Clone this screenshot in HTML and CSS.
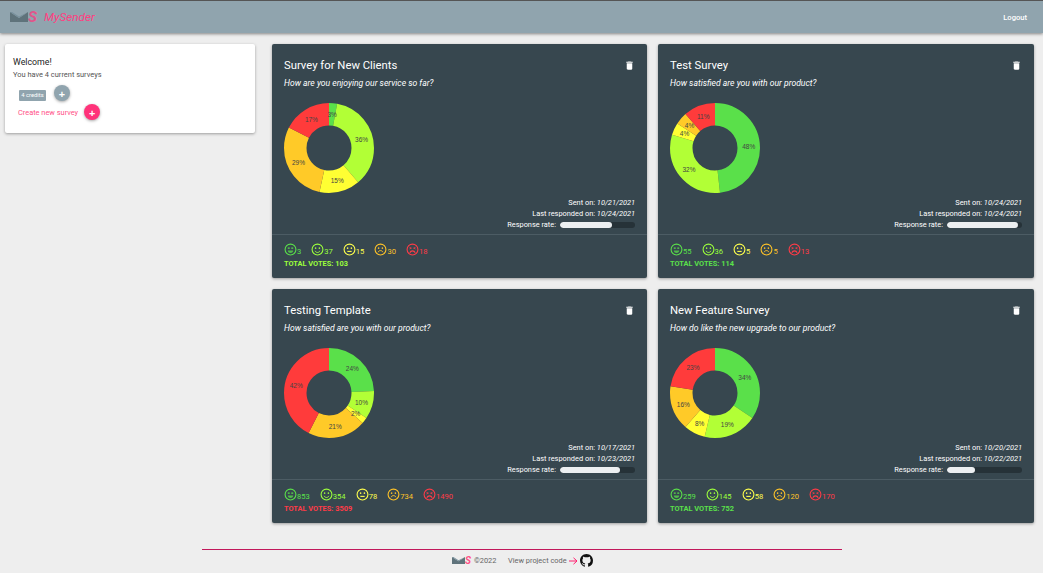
FILE: index.html
```html
<!DOCTYPE html>
<html lang="en">
<head>
    <meta charset="UTF-8">
    <meta name="viewport" content="width=device-width, initial-scale=1.0">
    <title>MySender</title>
    <link rel="stylesheet" href="styles.css">
</head>
<body>
    <svg class="defs" width="0" height="0">
        <symbol id="face1" viewBox="0 0 24 24"><circle cx="12" cy="12" r="10" fill="none" stroke="currentColor" stroke-width="2"/><path d="M7 9.500h3.500M13.500 9.500h3.500" stroke="currentColor" stroke-width="2"/><path d="M7 14h10a5 4.500 0 0 1-10 0z" fill="currentColor" opacity=".75"/></symbol>
        <symbol id="face2" viewBox="0 0 24 24"><circle cx="12" cy="12" r="10" fill="none" stroke="currentColor" stroke-width="2"/><circle cx="8.500" cy="9.500" r="1.500" fill="currentColor"/><circle cx="15.500" cy="9.500" r="1.500" fill="currentColor"/><path d="M7.500 14.500c1 2 2.600 3 4.500 3s3.500-1 4.500-3" fill="none" stroke="currentColor" stroke-width="1.800"/></symbol>
        <symbol id="face3" viewBox="0 0 24 24"><circle cx="12" cy="12" r="10" fill="none" stroke="currentColor" stroke-width="2"/><circle cx="8.500" cy="9.500" r="1.500" fill="currentColor"/><circle cx="15.500" cy="9.500" r="1.500" fill="currentColor"/><path d="M8 15.500h8" stroke="currentColor" stroke-width="2"/></symbol>
        <symbol id="face4" viewBox="0 0 24 24"><circle cx="12" cy="12" r="10" fill="none" stroke="currentColor" stroke-width="2"/><circle cx="8.500" cy="9.500" r="1.500" fill="currentColor"/><circle cx="15.500" cy="9.500" r="1.500" fill="currentColor"/><path d="M7.500 17c1-2 2.600-3 4.500-3s3.500 1 4.500 3" fill="none" stroke="currentColor" stroke-width="1.800"/></symbol>
        <symbol id="face5" viewBox="0 0 24 24"><circle cx="12" cy="12" r="10" fill="none" stroke="currentColor" stroke-width="2"/><path d="M6.500 8l3.500 1.500-3.500 1.500M17.500 8l-3.500 1.500 3.500 1.500" fill="none" stroke="currentColor" stroke-width="1.500"/><path d="M7 18c1-2.300 2.800-3.500 5-3.500s4 1.200 5 3.500" fill="none" stroke="currentColor" stroke-width="2"/></symbol>
        <symbol id="trash" viewBox="0 0 24 24"><path fill="currentColor" d="M6 19c0 1.100.9 2 2 2h8c1.100 0 2-.9 2-2V7H6v12zM19 4h-3.500l-1-1h-5l-1 1H5v2h14V4z"/></symbol>
        <symbol id="envelope" viewBox="0 0 18 10"><path fill="#5f737b" d="M0 0l9 6 9-6v10H0z"/><path fill="#78909c" d="M0 0h2l7 4.500L18 0 9 6z"/></symbol>
    </svg>

    <nav class="navbar">
        <a class="brand">
            <svg class="brand-mail"><use href="#envelope"/></svg>
            <span class="brand-s">S</span>
            <span class="brand-name">MySender</span>
        </a>
        <a class="logout">Logout</a>
    </nav>

    <main class="layout">
        <aside class="welcome">
            <p class="welcome-title">Welcome!</p>
            <p class="welcome-sub">You have 4 current surveys</p>
            <div class="credits-row">
                <span class="chip">4 credits</span>
                <button class="fab fab-grey">+</button>
            </div>
            <div class="create-row">
                <a class="create-link">Create new survey</a>
                <button class="fab fab-pink">+</button>
            </div>
        </aside>

        <section class="surveys">
            <article class="survey">
                <div class="survey-body">
                    <div class="survey-head">
                        <h2>Survey for New Clients</h2>
                        <svg class="trash"><use href="#trash"/></svg>
                    </div>
                    <p class="question">How are you enjoying our service so far?</p>
                    <svg class="donut" viewBox="0 0 90 90">
                        <g class="rings">
                            <circle class="s1" cx="45" cy="45" r="33.75" pathLength="100" stroke-dasharray="2.9 100" stroke-dashoffset="0"/>
                            <circle class="s2" cx="45" cy="45" r="33.75" pathLength="100" stroke-dasharray="35.9 100" stroke-dashoffset="-2.9"/>
                            <circle class="s3" cx="45" cy="45" r="33.75" pathLength="100" stroke-dasharray="14.6 100" stroke-dashoffset="-38.8"/>
                            <circle class="s4" cx="45" cy="45" r="33.75" pathLength="100" stroke-dasharray="29.1 100" stroke-dashoffset="-53.4"/>
                            <circle class="s5" cx="45" cy="45" r="33.75" pathLength="100" stroke-dasharray="17.5 100" stroke-dashoffset="-82.5"/>
                        </g>
                        <text x="48.100" y="11.400">3%</text>
                        <text x="77.600" y="36.300">36%</text>
                        <text x="53.200" y="77.700">15%</text>
                        <text x="14.500" y="59.500">29%</text>
                        <text x="27.400" y="16.200">17%</text>
                    </svg>
                    <div class="meta">
                        <p>Sent on: <em>10/21/2021</em></p>
                        <p>Last responded on: <em>10/24/2021</em></p>
                        <div class="rate">Response rate: <span class="bar"><span class="fill" style="width:69%"></span></span></div>
                    </div>
                </div>
                <div class="survey-foot">
                    <div class="votes">
                        <span class="vote c1"><svg><use href="#face1"/></svg>3</span>
                        <span class="vote c2"><svg><use href="#face2"/></svg>37</span>
                        <span class="vote c3"><svg><use href="#face3"/></svg>15</span>
                        <span class="vote c4"><svg><use href="#face4"/></svg>30</span>
                        <span class="vote c5"><svg><use href="#face5"/></svg>18</span>
                    </div>
                    <p class="total c2">Total votes: 103</p>
                </div>
            </article>

            <article class="survey">
                <div class="survey-body">
                    <div class="survey-head">
                        <h2>Test Survey</h2>
                        <svg class="trash"><use href="#trash"/></svg>
                    </div>
                    <p class="question">How satisfied are you with our product?</p>
                    <svg class="donut" viewBox="0 0 90 90">
                        <g class="rings">
                            <circle class="s1" cx="45" cy="45" r="33.75" pathLength="100" stroke-dasharray="48.2 100" stroke-dashoffset="0"/>
                            <circle class="s2" cx="45" cy="45" r="33.75" pathLength="100" stroke-dasharray="31.6 100" stroke-dashoffset="-48.2"/>
                            <circle class="s3" cx="45" cy="45" r="33.75" pathLength="100" stroke-dasharray="4.4 100" stroke-dashoffset="-79.8"/>
                            <circle class="s4" cx="45" cy="45" r="33.75" pathLength="100" stroke-dasharray="4.4 100" stroke-dashoffset="-84.2"/>
                            <circle class="s5" cx="45" cy="45" r="33.75" pathLength="100" stroke-dasharray="11.4 100" stroke-dashoffset="-88.6"/>
                        </g>
                        <text x="78.700" y="43.100">48%</text>
                        <text x="19" y="66.500">32%</text>
                        <text x="14.500" y="30.600">4%</text>
                        <text x="19.500" y="22.900">4%</text>
                        <text x="33.200" y="13.400">11%</text>
                    </svg>
                    <div class="meta">
                        <p>Sent on: <em>10/24/2021</em></p>
                        <p>Last responded on: <em>10/24/2021</em></p>
                        <div class="rate">Response rate: <span class="bar"><span class="fill" style="width:95%"></span></span></div>
                    </div>
                </div>
                <div class="survey-foot">
                    <div class="votes">
                        <span class="vote c1"><svg><use href="#face1"/></svg>55</span>
                        <span class="vote c2"><svg><use href="#face2"/></svg>36</span>
                        <span class="vote c3"><svg><use href="#face3"/></svg>5</span>
                        <span class="vote c4"><svg><use href="#face4"/></svg>5</span>
                        <span class="vote c5"><svg><use href="#face5"/></svg>13</span>
                    </div>
                    <p class="total c1">Total votes: 114</p>
                </div>
            </article>

            <article class="survey">
                <div class="survey-body">
                    <div class="survey-head">
                        <h2>Testing Template</h2>
                        <svg class="trash"><use href="#trash"/></svg>
                    </div>
                    <p class="question">How satisfied are you with our product?</p>
                    <svg class="donut" viewBox="0 0 90 90">
                        <g class="rings">
                            <circle class="s1" cx="45" cy="45" r="33.75" pathLength="100" stroke-dasharray="24.3 100" stroke-dashoffset="0"/>
                            <circle class="s2" cx="45" cy="45" r="33.75" pathLength="100" stroke-dasharray="10.1 100" stroke-dashoffset="-24.3"/>
                            <circle class="s3" cx="45" cy="45" r="33.75" pathLength="100" stroke-dasharray="2.2 100" stroke-dashoffset="-34.4"/>
                            <circle class="s4" cx="45" cy="45" r="33.75" pathLength="100" stroke-dasharray="20.9 100" stroke-dashoffset="-36.6"/>
                            <circle class="s5" cx="45" cy="45" r="33.75" pathLength="100" stroke-dasharray="42.5 100" stroke-dashoffset="-57.5"/>
                        </g>
                        <text x="68.300" y="20.600">24%</text>
                        <text x="77.500" y="54.100">10%</text>
                        <text x="71.700" y="65.700">2%</text>
                        <text x="51.200" y="78.200">21%</text>
                        <text x="12.200" y="37.100">42%</text>
                    </svg>
                    <div class="meta">
                        <p>Sent on: <em>10/17/2021</em></p>
                        <p>Last responded on: <em>10/23/2021</em></p>
                        <div class="rate">Response rate: <span class="bar"><span class="fill" style="width:80%"></span></span></div>
                    </div>
                </div>
                <div class="survey-foot">
                    <div class="votes">
                        <span class="vote c1"><svg><use href="#face1"/></svg>853</span>
                        <span class="vote c2"><svg><use href="#face2"/></svg>354</span>
                        <span class="vote c3"><svg><use href="#face3"/></svg>78</span>
                        <span class="vote c4"><svg><use href="#face4"/></svg>734</span>
                        <span class="vote c5"><svg><use href="#face5"/></svg>1490</span>
                    </div>
                    <p class="total c5">Total votes: 3509</p>
                </div>
            </article>

            <article class="survey">
                <div class="survey-body">
                    <div class="survey-head">
                        <h2>New Feature Survey</h2>
                        <svg class="trash"><use href="#trash"/></svg>
                    </div>
                    <p class="question">How do like the new upgrade to our product?</p>
                    <svg class="donut" viewBox="0 0 90 90">
                        <g class="rings">
                            <circle class="s1" cx="45" cy="45" r="33.75" pathLength="100" stroke-dasharray="34.4 100" stroke-dashoffset="0"/>
                            <circle class="s2" cx="45" cy="45" r="33.75" pathLength="100" stroke-dasharray="19.3 100" stroke-dashoffset="-34.4"/>
                            <circle class="s3" cx="45" cy="45" r="33.75" pathLength="100" stroke-dasharray="7.7 100" stroke-dashoffset="-53.7"/>
                            <circle class="s4" cx="45" cy="45" r="33.75" pathLength="100" stroke-dasharray="16 100" stroke-dashoffset="-61.4"/>
                            <circle class="s5" cx="45" cy="45" r="33.75" pathLength="100" stroke-dasharray="22.6 100" stroke-dashoffset="-77.4"/>
                        </g>
                        <text x="74.800" y="29.100">34%</text>
                        <text x="57.300" y="76.400">19%</text>
                        <text x="29.600" y="75">8%</text>
                        <text x="13.300" y="56.600">16%</text>
                        <text x="23" y="19.400">23%</text>
                    </svg>
                    <div class="meta">
                        <p>Sent on: <em>10/20/2021</em></p>
                        <p>Last responded on: <em>10/22/2021</em></p>
                        <div class="rate">Response rate: <span class="bar"><span class="fill" style="width:37%"></span></span></div>
                    </div>
                </div>
                <div class="survey-foot">
                    <div class="votes">
                        <span class="vote c1"><svg><use href="#face1"/></svg>259</span>
                        <span class="vote c2"><svg><use href="#face2"/></svg>145</span>
                        <span class="vote c3"><svg><use href="#face3"/></svg>58</span>
                        <span class="vote c4"><svg><use href="#face4"/></svg>120</span>
                        <span class="vote c5"><svg><use href="#face5"/></svg>170</span>
                    </div>
                    <p class="total c1">Total votes: 752</p>
                </div>
            </article>
        </section>
    </main>

    <footer class="footer">
        <div class="footer-row">
            <svg class="foot-mail"><use href="#envelope"/></svg>
            <span class="foot-s">S</span>
            <span class="copy">©2022</span>
            <a class="code-link">View project code</a>
            <svg class="arrow" viewBox="0 0 9 8"><path d="M0 4h8M4.500 .8L8 4 4.500 7.200" fill="none" stroke="#ff1f6f" stroke-width="1"/></svg>
            <svg class="github" viewBox="0 0 16 16"><path fill="#111" d="M8 0C3.580 0 0 3.580 0 8c0 3.540 2.290 6.530 5.470 7.590.4.070.55-.17.55-.38 0-.19-.01-.82-.01-1.490-2.010.37-2.530-.49-2.690-.94-.09-.23-.48-.94-.82-1.130-.28-.15-.68-.52-.01-.53.63-.01 1.080.58 1.230.82.72 1.210 1.870.87 2.330.66.07-.52.28-.87.51-1.070-1.780-.2-3.640-.89-3.640-3.950 0-.87.31-1.590.82-2.150-.08-.2-.36-1.020.08-2.120 0 0 .67-.21 2.200.82.64-.18 1.320-.27 2-.27.68 0 1.360.09 2 .27 1.530-1.040 2.200-.82 2.200-.82.44 1.100.16 1.920.08 2.120.51.56.82 1.270.82 2.150 0 3.070-1.870 3.750-3.650 3.950.29.25.54.73.54 1.480 0 1.070-.01 1.930-.01 2.200 0 .21.15.46.55.38A8.013 8.013 0 0016 8c0-4.420-3.580-8-8-8z"/></svg>
        </div>
    </footer>
</body>
</html>
```

FILE: styles.css
```css
* {
    box-sizing: border-box;
}
html, body {
    height: 573px;
    overflow: hidden;
}
body {
    margin: 0;
    background-color: #eeeeee;
    font-family: Roboto, "Open Sans", sans-serif;
    color: #444;
}
p {
    margin: 0;
}
.defs {
    display: block;
    height: 0;
}

/* navbar */
.navbar {
    height: 33px;
    padding: 0 16px 0 10px;
    display: flex;
    align-items: center;
    justify-content: space-between;
    background-color: #90a4ae;
    border-top: 1px solid #555;
    box-shadow: 0 1px 3px rgba(0, 0, 0, 0.45);
}
.brand {
    display: flex;
    align-items: center;
}
.brand-mail {
    width: 18px;
    height: 10px;
}
.brand-s {
    width: 16px;
    font-size: 15px;
    font-weight: 700;
    font-style: italic;
    color: #e0558a;
    line-height: 1;
}
.brand-name {
    font-size: 11.800px;
    font-style: italic;
    color: #ff4081;
}
.logout {
    font-size: 7.600px;
    font-weight: 500;
    color: #fff;
}

/* page columns */
.layout {
    display: flex;
    align-items: flex-start;
    gap: 17px;
    padding: 11px 9px 0 5px;
}
.welcome {
    width: 250px;
    height: 89px;
    flex: none;
    padding: 12px 8px 0;
    background-color: #fff;
    border-radius: 2px;
    box-shadow: 0 1px 3px rgba(0, 0, 0, 0.35);
}
.welcome-title {
    font-size: 8.800px;
    line-height: 13px;
    color: #222;
}
.welcome-sub {
    font-size: 7.450px;
    line-height: 12px;
    color: #555;
}
.credits-row {
    display: flex;
    align-items: center;
    gap: 8px;
    margin: 4px 0 0 6px;
}
.chip {
    width: 27px;
    height: 11px;
    margin-top: 4px;
    background-color: #90a4ae;
    border-radius: 1px;
    color: #fff;
    font-size: 5.800px;
    line-height: 11px;
    text-align: center;
}
.create-row {
    display: flex;
    align-items: center;
    gap: 6px;
    margin: 3px 0 0 5px;
}
.create-link {
    font-size: 7.400px;
    color: #ff4f86;
}
.fab {
    width: 16px;
    height: 16px;
    padding: 0;
    border: none;
    border-radius: 50%;
    color: #fff;
    font-family: "Open Sans", sans-serif;
    font-size: 11px;
    font-weight: 700;
    line-height: 15px;
    text-align: center;
    box-shadow: 0 1px 3px rgba(0, 0, 0, 0.35);
}
.fab-grey {
    background-color: #90a4ae;
}
.fab-pink {
    background-color: #ff337a;
}

/* survey cards */
.surveys {
    flex: 1;
    display: grid;
    grid-template-columns: 375px 376px;
    grid-auto-rows: 234px;
    gap: 11px;
}
.survey {
    background-color: #37474f;
    color: #fff;
    border-radius: 2px;
    box-shadow: 0 1px 3px rgba(0, 0, 0, 0.35);
    display: flex;
    flex-direction: column;
}
.survey-body {
    height: 191px;
    padding: 12px 12px 0;
    border-bottom: 1px solid #4c5c64;
}
.survey-head {
    display: flex;
    justify-content: space-between;
    align-items: center;
    height: 18px;
}
.survey-head h2 {
    margin: 0;
    font-size: 11.300px;
    font-weight: 400;
}
.trash {
    width: 11px;
    height: 11px;
    color: #fff;
}
.question {
    font-size: 8.600px;
    font-style: italic;
    line-height: 12px;
    margin-top: 3px;
}
.donut {
    display: block;
    width: 90px;
    height: 90px;
    margin-top: 14px;
}
.rings circle {
    fill: none;
    stroke-width: 22.5;
}
.rings {
    transform: rotate(-90deg);
    transform-origin: 45px 45px;
}
.s1 { stroke: #5ae04a; }
.s2 { stroke: #b2ff36; }
.s3 { stroke: #ffff33; }
.s4 { stroke: #ffca28; }
.s5 { stroke: #ff3b3b; }
.donut text {
    font-family: "Liberation Sans", sans-serif;
    font-size: 6.500px;
    fill: #444;
    text-anchor: middle;
    dominant-baseline: central;
}
.meta {
    margin-top: 4px;
    font-size: 7.400px;
    line-height: 11px;
    text-align: right;
}
.rate {
    display: flex;
    justify-content: flex-end;
    align-items: center;
    gap: 4px;
}
.bar {
    display: block;
    width: 75px;
    height: 6px;
    background-color: #263238;
    border-radius: 3px;
    overflow: hidden;
}
.fill {
    display: block;
    height: 100%;
    background-color: #eceff1;
    border-radius: 3px;
}
.survey-foot {
    padding: 8px 12px 0;
}
.votes {
    display: flex;
    gap: 10px;
    height: 14px;
}
.vote {
    display: flex;
    align-items: flex-end;
    font-size: 7.600px;
    line-height: 10px;
}
.vote svg {
    width: 13px;
    height: 13px;
    margin-bottom: 1px;
}
.c1 { color: #5ae04a; }
.c2 { color: #9cff3c; }
.c3 { color: #ffff4d; }
.c4 { color: #ffc328; }
.c5 { color: #ff3b47; }
.total {
    margin-top: 2px;
    font-size: 7.400px;
    font-weight: 700;
    line-height: 10px;
    text-transform: uppercase;
}

/* footer */
.footer {
    width: 640px;
    margin: 26px auto 0 202px;
    border-top: 1px solid #c2185b;
}
.footer-row {
    display: flex;
    align-items: center;
    padding: 4px 0 0 250px;
    font-size: 7.400px;
    color: #666;
}
.foot-mail {
    width: 13px;
    height: 9px;
}
.foot-s {
    width: 9px;
    font-size: 10px;
    font-weight: 700;
    font-style: italic;
    color: #ff4f86;
}
.copy {
    width: 34px;
}
.code-link {
    width: 61px;
    white-space: nowrap;
}
.arrow {
    width: 9px;
    height: 8px;
}
.github {
    width: 13px;
    height: 13px;
    margin-left: 2px;
}
```
